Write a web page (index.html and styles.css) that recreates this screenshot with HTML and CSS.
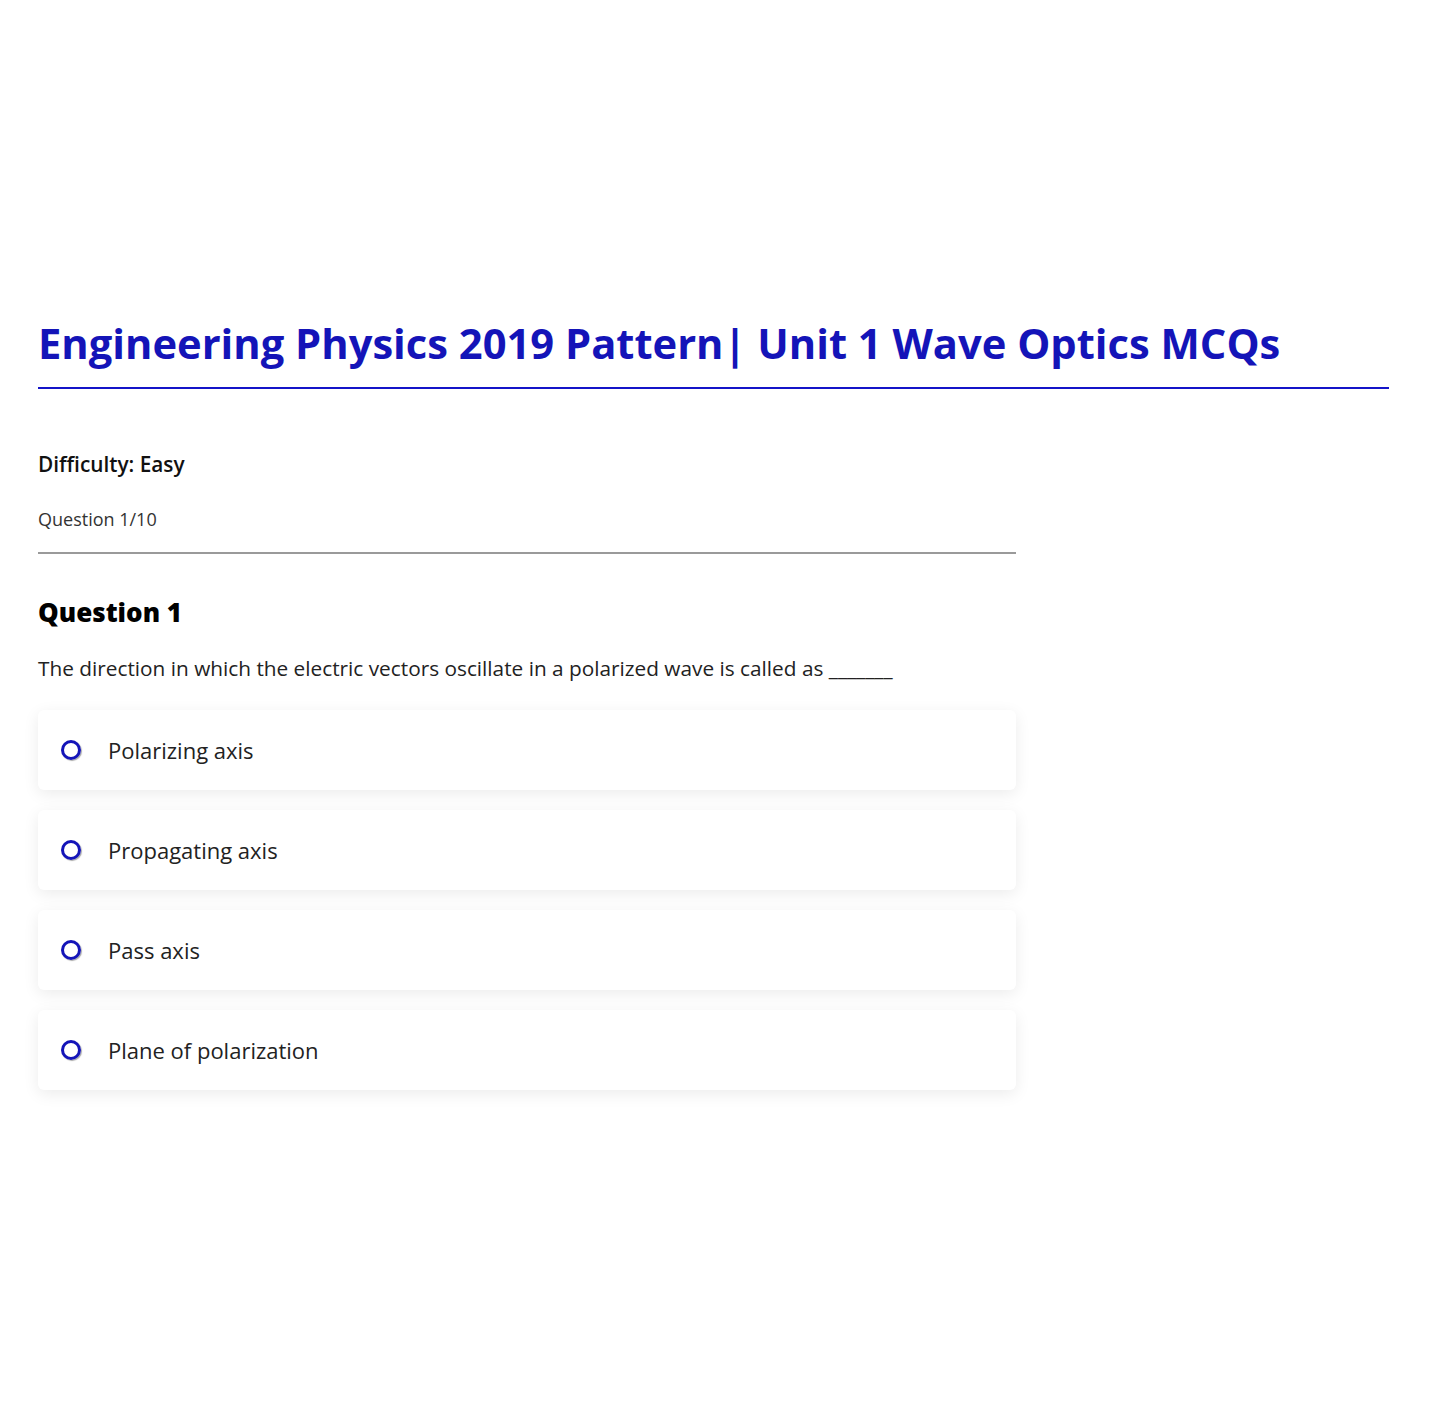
FILE: index.html
```html
<!DOCTYPE html>
<html lang="en">
<head>
  <meta charset="UTF-8" />
  <meta name="viewport" content="width=device-width, initial-scale=1.0"/>
  <title>Wave Optics MCQs</title>
  <link rel="stylesheet" href="styles.css">
</head>
<body>
  <div class="page">
    <h1 class="title">Engineering Physics 2019 Pattern| Unit 1 Wave Optics MCQs</h1>

    <div class="quiz">
      <p class="difficulty">Difficulty: Easy</p>
      <p class="progress">Question 1/10</p>

      <h2 class="q-head">Question 1</h2>
      <p class="q-text">The direction in which the electric vectors oscillate in a polarized wave is called as _______</p>

      <div class="options">
        <label class="option"><input type="radio" name="q1"><span class="dot"></span>Polarizing axis</label>
        <label class="option"><input type="radio" name="q1"><span class="dot"></span>Propagating axis</label>
        <label class="option"><input type="radio" name="q1"><span class="dot"></span>Pass axis</label>
        <label class="option"><input type="radio" name="q1"><span class="dot"></span>Plane of polarization</label>
      </div>
    </div>
  </div>
</body>
</html>
```

FILE: styles.css
```css
body {
  margin: 0;
  font-family: 'Open Sans', sans-serif;
  background: #fff;
  color: #222;
}
.page {
  padding: 315px 48px 200px 38px;
}
.title {
  margin: 0;
  font-size: 41.7px;
  font-weight: 700;
  color: #1414b8;
  line-height: 56px;
  padding-bottom: 16px;
  border-bottom: 2px solid #1414c8;
}
.quiz {
  width: 978px;
}
.difficulty {
  margin: 59px 0 0;
  font-size: 20.8px;
  font-weight: 600;
  color: #111;
  line-height: 32px;
}
.progress {
  margin: 26px 0 0;
  font-size: 18px;
  color: #333;
  line-height: 26px;
  padding-bottom: 20px;
  border-bottom: 2px solid #9a9a9a;
}
.q-head {
  margin: 40px 0 0;
  font-size: 26px;
  font-weight: 800;
  color: #000;
  line-height: 36px;
}
.q-text {
  margin: 23px 0 0;
  font-size: 20.8px;
  line-height: 30px;
  color: #222;
}
.options {
  margin-top: 27px;
  display: flex;
  flex-direction: column;
  gap: 20px;
}
.option {
  display: flex;
  align-items: center;
  height: 80px;
  padding: 0 23px;
  background: #fff;
  border-radius: 6px;
  box-shadow: 0 4px 16px rgba(0,0,0,0.08);
  font-size: 22px;
  color: #222;
  cursor: pointer;
}
.option input { display: none; }
.dot {
  width: 14px;
  height: 14px;
  border: 3px solid #1414b8;
  border-radius: 50%;
  margin-right: 27px;
  box-shadow: 1px 1px 1px rgba(0,0,0,0.35);
}
.option input:checked + .dot { background: #1414b8; }
```
